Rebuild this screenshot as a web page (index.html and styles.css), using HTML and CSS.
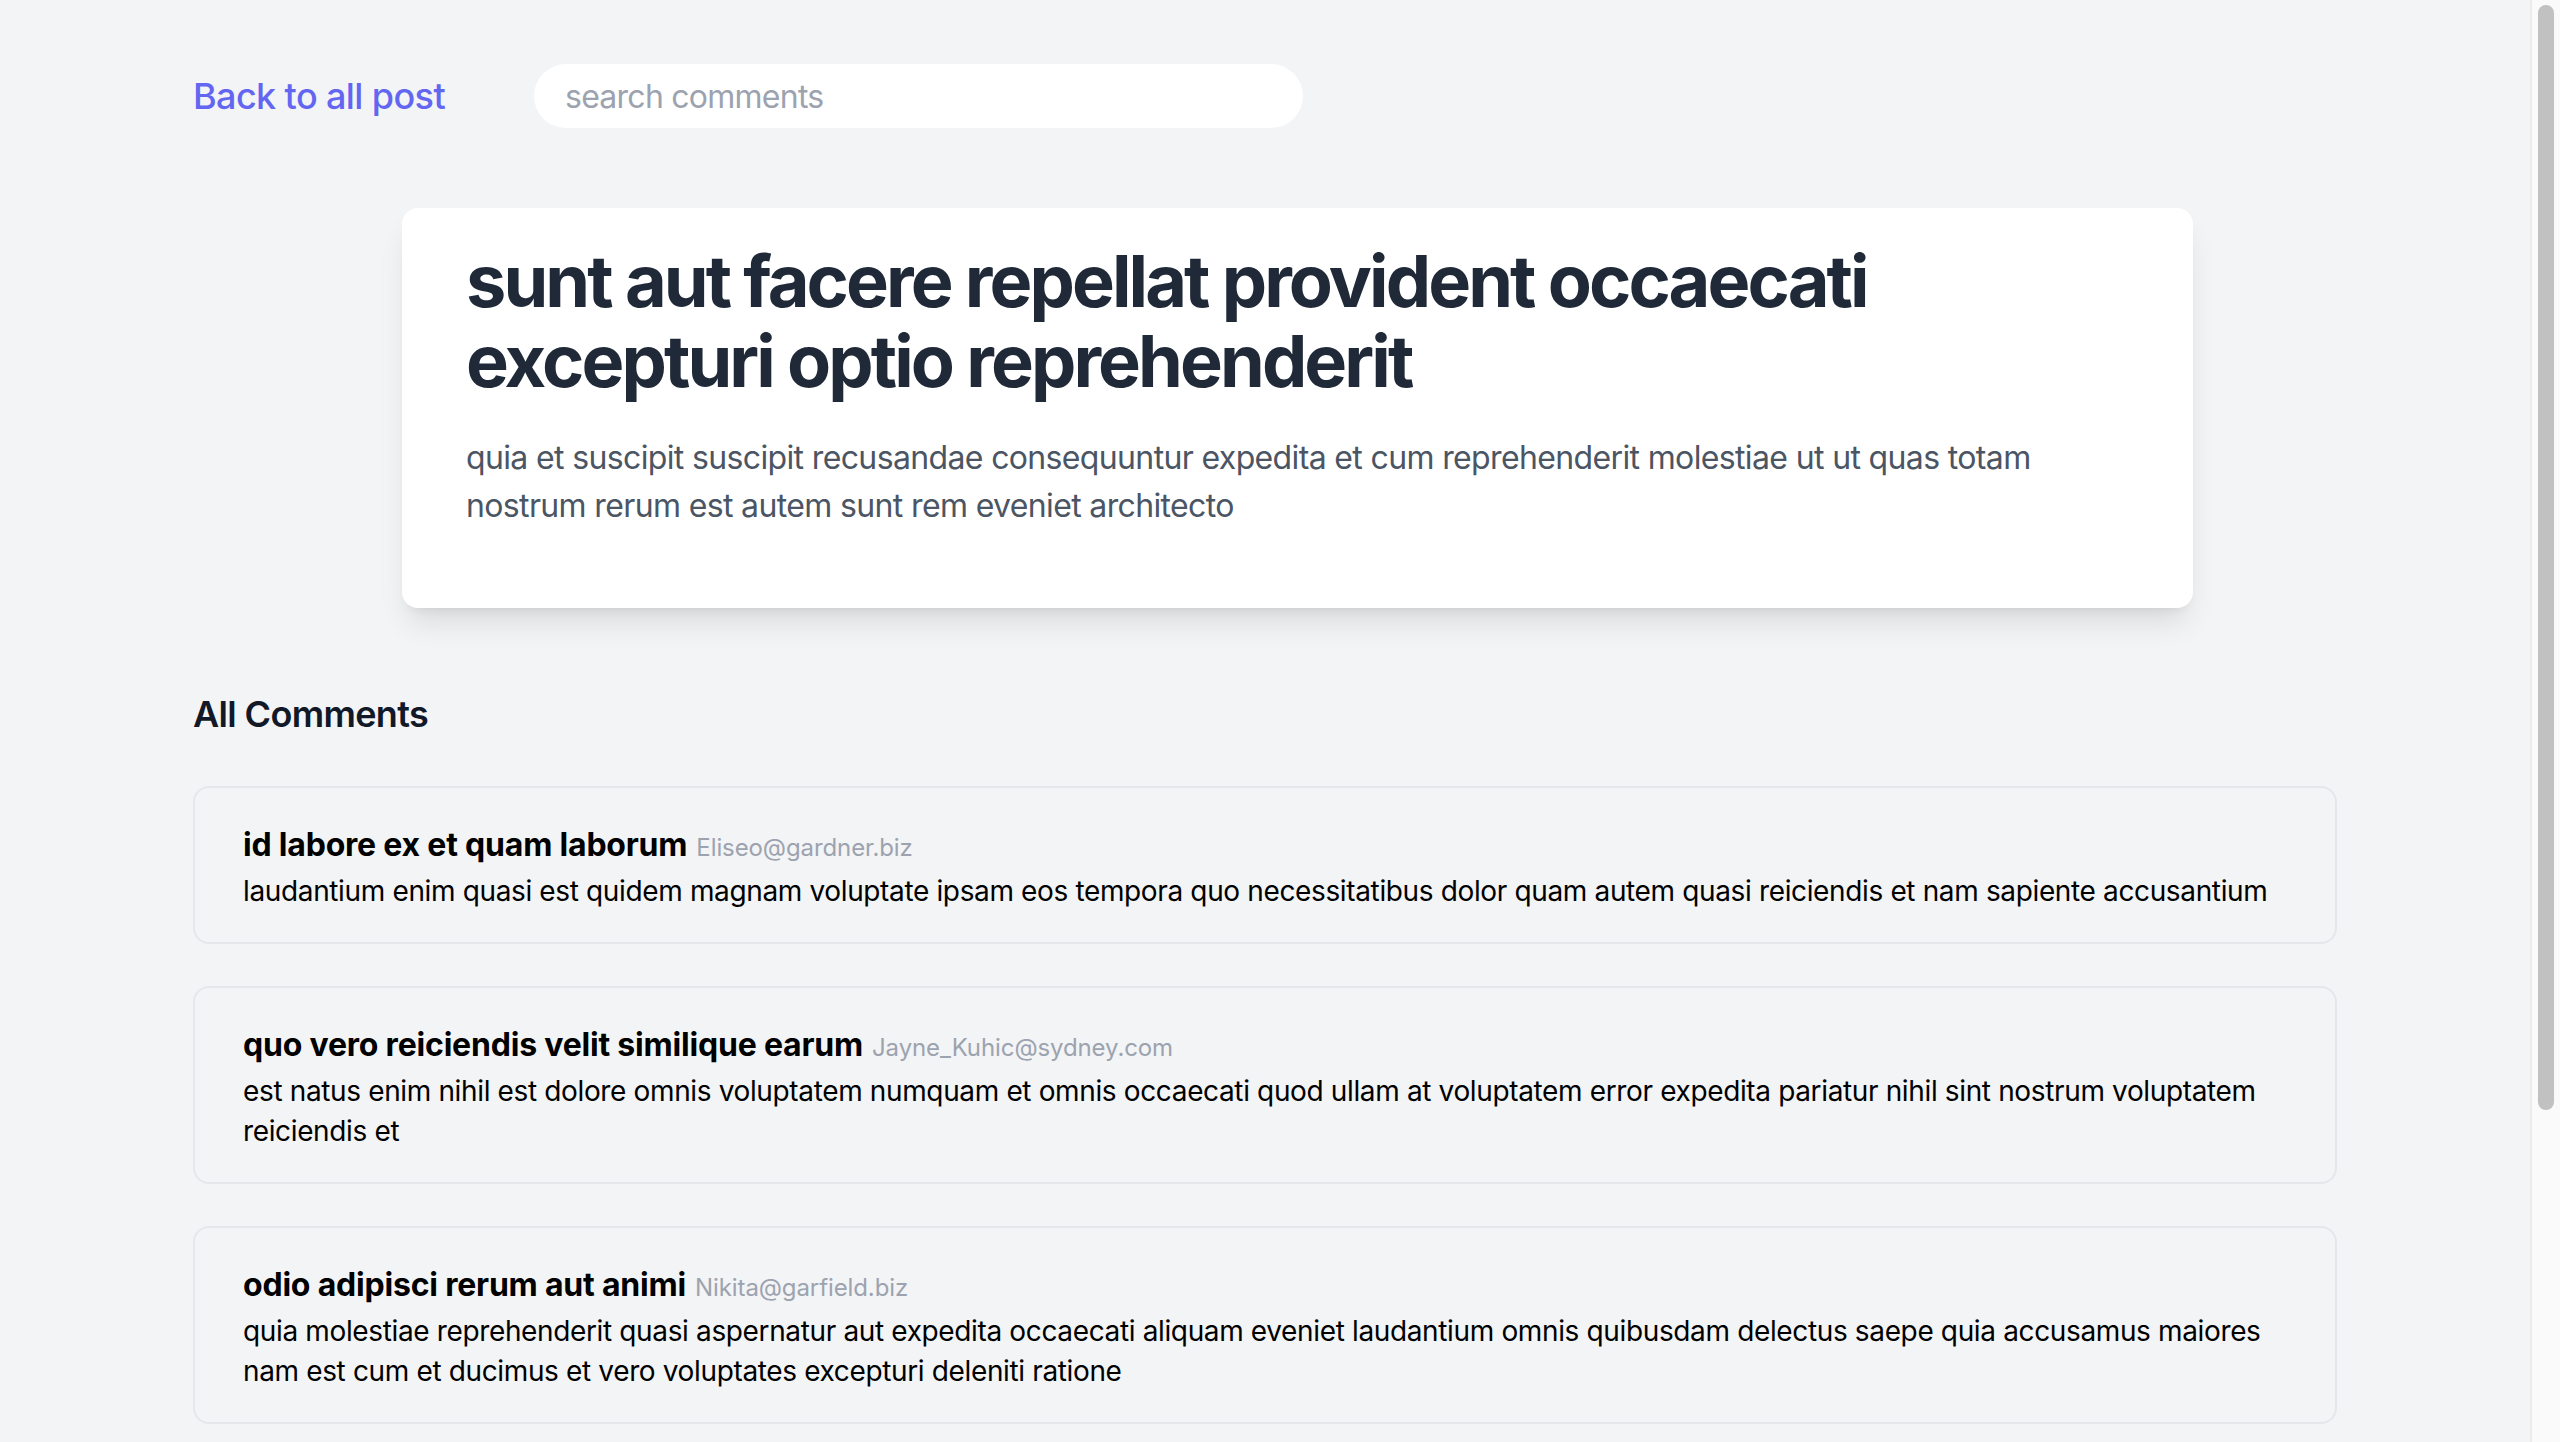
FILE: index.html
```html
<!DOCTYPE html>
<html lang="en">
<head>
<meta charset="utf-8">
<title>Post</title>
<link rel="stylesheet" href="styles.css">
</head>
<body>
<div class="page">
  <header class="topbar">
    <a class="back" href="#">Back to all post</a>
    <input class="search" type="text" placeholder="search comments">
  </header>

  <article class="post">
    <h1 class="post-title">sunt aut facere repellat provident occaecati excepturi optio reprehenderit</h1>
    <p class="post-body">quia et suscipit suscipit recusandae consequuntur expedita et cum reprehenderit molestiae ut ut quas totam nostrum rerum est autem sunt rem eveniet architecto</p>
  </article>

  <h2 class="section-title">All Comments</h2>

  <ul class="comments">
    <li class="comment">
      <div class="comment-head"><span class="comment-name">id labore ex et quam laborum</span> <span class="comment-email">Eliseo@gardner.biz</span></div>
      <p class="comment-body">laudantium enim quasi est quidem magnam voluptate ipsam eos tempora quo necessitatibus dolor quam autem quasi reiciendis et nam sapiente accusantium</p>
    </li>
    <li class="comment">
      <div class="comment-head"><span class="comment-name">quo vero reiciendis velit similique earum</span> <span class="comment-email">Jayne_Kuhic@sydney.com</span></div>
      <p class="comment-body">est natus enim nihil est dolore omnis voluptatem numquam et omnis occaecati quod ullam at voluptatem error expedita pariatur nihil sint nostrum voluptatem reiciendis et</p>
    </li>
    <li class="comment">
      <div class="comment-head"><span class="comment-name">odio adipisci rerum aut animi</span> <span class="comment-email">Nikita@garfield.biz</span></div>
      <p class="comment-body">quia molestiae reprehenderit quasi aspernatur aut expedita occaecati aliquam eveniet laudantium omnis quibusdam delectus saepe quia accusamus maiores nam est cum et ducimus et vero voluptates excepturi deleniti ratione</p>
    </li>
  </ul>
</div>
<div class="scrollbar" aria-hidden="true"><div class="scrollbar-thumb"></div></div>
</body>
</html>
```

FILE: styles.css
```css
html, body {
  margin: 0;
  padding: 0;
}

body {
  display: flex;
  height: 1442px;
  overflow: hidden;
  background: #f3f4f6;
  font-family: Inter, "Noto Sans", "Liberation Sans", sans-serif;
  color: #111827;
}

.page {
  flex: 1;
  min-width: 0;
  overflow: hidden;
  padding: 0 193px;
}

.scrollbar {
  flex: none;
  width: 30px;
  box-sizing: border-box;
  background: #fafafa;
  border-left: 2px solid #ebebeb;
  padding: 5px 6px 0 6px;
}

.scrollbar-thumb {
  height: 1105px;
  border-radius: 8px;
  background: #c1c1c1;
}

.topbar {
  display: flex;
  align-items: center;
  padding-top: 64px;
}

.back {
  flex: none;
  width: 341px;
  font-size: 36px;
  line-height: 56px;
  font-weight: 500;
  letter-spacing: -0.6px;
  color: #6366f1;
  text-decoration: none;
}

.search {
  width: 769px;
  height: 64px;
  box-sizing: border-box;
  border: none;
  outline: none;
  border-radius: 9999px;
  background: #ffffff;
  padding: 0 31px;
  font-family: inherit;
  font-size: 32px;
  letter-spacing: -0.75px;
  color: #111827;
}

.search::placeholder {
  color: #9ca3af;
}

.post {
  margin: 80px 0 0 209px;
  width: 1791px;
  box-sizing: border-box;
  padding: 33px 64px 78px;
  background: #ffffff;
  border-radius: 16px;
  box-shadow: 0 20px 30px -6px rgba(0, 0, 0, 0.1), 0 8px 12px -8px rgba(0, 0, 0, 0.1);
}

.post-title {
  margin: 0 0 33px;
  font-size: 72px;
  line-height: 80px;
  font-weight: 700;
  letter-spacing: -2.9px;
  color: #1f2937;
}

.post-body {
  margin: 0;
  font-size: 32px;
  line-height: 48px;
  letter-spacing: -0.64px;
  color: #4b5563;
}

.section-title {
  margin: 78px 0 44px;
  font-size: 36px;
  line-height: 56px;
  font-weight: 600;
  letter-spacing: -0.65px;
  color: #111827;
}

.comments {
  list-style: none;
  margin: 0;
  padding: 0;
  display: flex;
  flex-direction: column;
  gap: 42px;
}

.comment {
  border: 2px solid #e5e7eb;
  border-radius: 16px;
  padding: 33px 48px 31px;
}

.comment-head {
  font-size: 32px;
  line-height: 48px;
}

.comment-name {
  font-weight: 700;
  letter-spacing: -0.2px;
  color: #000000;
}

.comment-email {
  font-size: 24px;
  line-height: 1;
  letter-spacing: -0.1px;
  color: #9ca3af;
}

.comment-body {
  margin: 2px 0 0;
  font-size: 28px;
  line-height: 40px;
  letter-spacing: -0.36px;
  color: #000000;
}
```
